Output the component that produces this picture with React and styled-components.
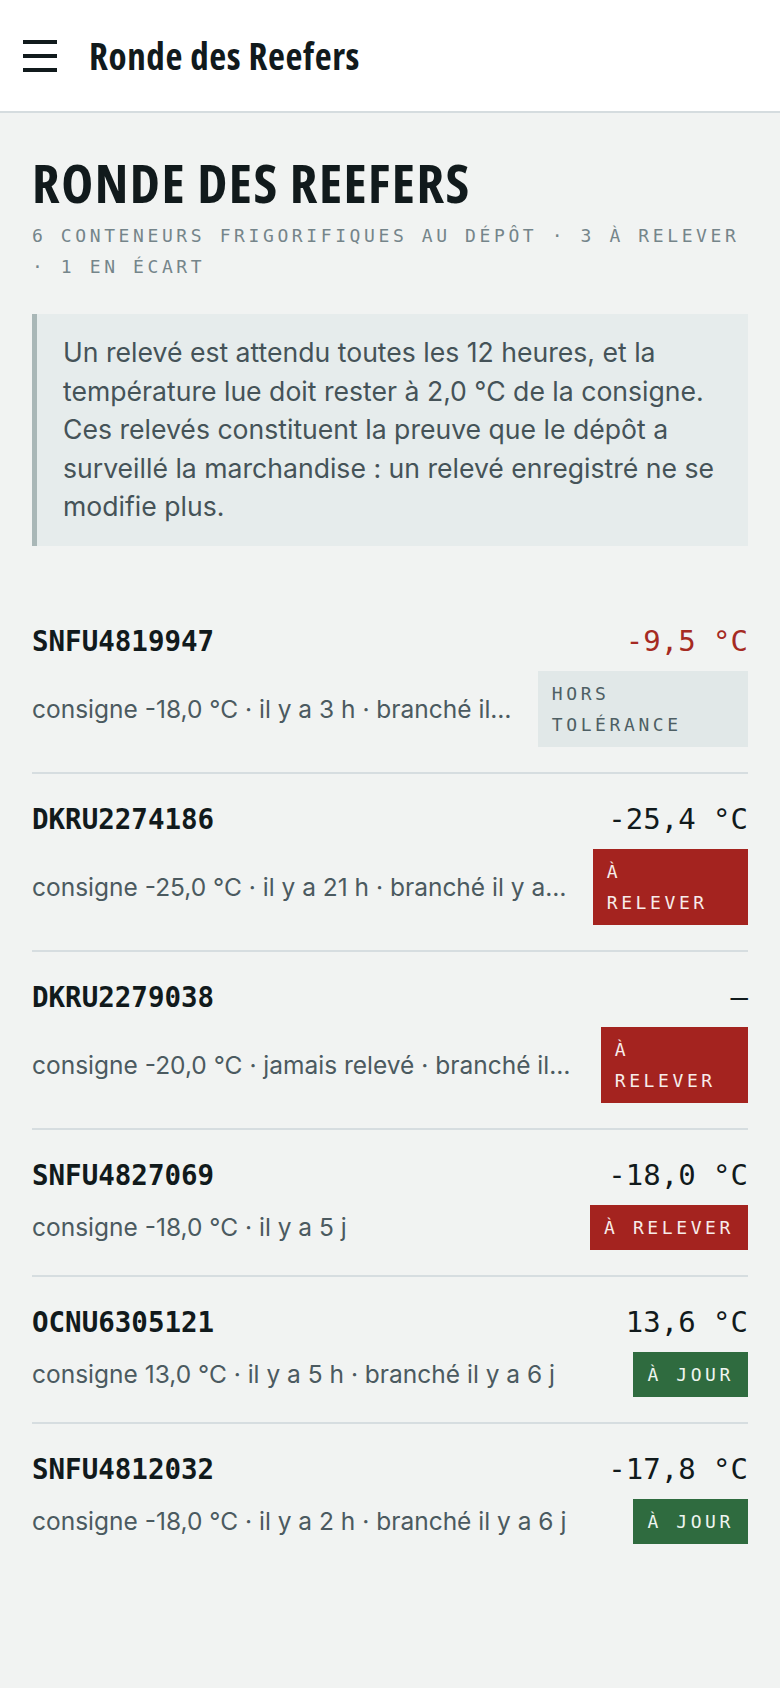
import styled, { createGlobalStyle } from 'styled-components';

const GlobalStyle = createGlobalStyle`
  * { box-sizing: border-box; }
  body {
    margin: 0;
    background: #f1f3f2;
    color: #111a1c;
    font-family: Inter, Roboto, "Liberation Sans", sans-serif;
  }
`;

const mono = `"DejaVu Sans Mono", "Liberation Mono", monospace`;

const Header = styled.header`
  height: 113px;
  background: #fff;
  border-bottom: 2px solid #d5dcdf;
  display: flex;
  align-items: center;
  gap: 32px;
  padding: 0 23px;
`;

const Burger = styled.button`
  display: flex;
  flex-direction: column;
  gap: 10px;
  padding: 0;
  border: 0;
  background: none;
  cursor: pointer;

  span {
    display: block;
    width: 34px;
    height: 4px;
    background: #111a1c;
  }
`;

const HeaderTitle = styled.div`
  font-family: "Open Sans", sans-serif;
  font-stretch: 75%;
  font-weight: 700;
  font-size: 37px;
  letter-spacing: 0.6px;
`;

const Main = styled.main`
  padding: 40px 32px 80px;
`;

const Title = styled.h1`
  margin: 0;
  font-family: "Open Sans", sans-serif;
  font-stretch: 75%;
  font-weight: 700;
  font-size: 54px;
  line-height: 1.1;
  letter-spacing: 1.5px;
  text-transform: uppercase;
`;

const Subtitle = styled.p`
  margin: 8px 0 0;
  font-family: ${mono};
  font-size: 18px;
  line-height: 31px;
  letter-spacing: 0.2em;
  color: #75858a;
  text-transform: uppercase;
`;

const Note = styled.p`
  margin: 32px 0 0;
  padding: 19px 24px 20px 26px;
  background: #e6ecec;
  border-left: 5px solid #a9b7b7;
  font-size: 26.6px;
  line-height: 38.5px;
  color: #455358;
`;

const List = styled.ul`
  list-style: none;
  margin: 50px 0 0;
  padding: 0;
`;

const Row = styled.li`
  padding: 27px 0 25px;
  & + & {
    border-top: 2px solid #d6dde0;
  }
`;

const TopLine = styled.div`
  display: flex;
  justify-content: space-between;
  align-items: baseline;
`;

const Code = styled.span`
  font-family: ${mono};
  font-weight: 700;
  font-size: 27.5px;
  line-height: 36px;
`;

const Temp = styled.span`
  font-family: ${mono};
  font-size: 29px;
  line-height: 36px;
  color: ${(p) => (p.$alert ? '#a52a22' : '#111a1c')};
`;

const BottomLine = styled.div`
  display: flex;
  align-items: center;
  gap: 24px;
  margin-top: 12px;
`;

const Meta = styled.span`
  flex: 1 1 auto;
  min-width: 0;
  white-space: nowrap;
  overflow: hidden;
  text-overflow: ellipsis;
  font-size: 24.5px;
  color: #4b5a60;
`;

const badgeColors = {
  grey: { bg: '#e1e8e8', fg: '#4e5f64' },
  red: { bg: '#a4231f', fg: '#f7ecea' },
  green: { bg: '#2f6b3f', fg: '#eef5ef' },
};

const Badge = styled.span`
  flex: 0 1 auto;
  padding: 7px 14px;
  font-family: ${mono};
  font-size: 18px;
  line-height: 31px;
  letter-spacing: 0.2em;
  text-transform: uppercase;
  background: ${(p) => badgeColors[p.$tone].bg};
  color: ${(p) => badgeColors[p.$tone].fg};
`;

const reefers = [
  { id: 'SNFU4819947', temp: '-9,5 °C', alert: true, meta: 'consigne -18,0 °C · il y a 3 h · branché il y a 6 j', badge: 'Hors tolérance', tone: 'grey' },
  { id: 'DKRU2274186', temp: '-25,4 °C', meta: 'consigne -25,0 °C · il y a 21 h · branché il y a 6 j', badge: 'À relever', tone: 'red' },
  { id: 'DKRU2279038', temp: '—', meta: 'consigne -20,0 °C · jamais relevé · branché il y a 6 j', badge: 'À relever', tone: 'red' },
  { id: 'SNFU4827069', temp: '-18,0 °C', meta: 'consigne -18,0 °C · il y a 5 j', badge: 'À relever', tone: 'red' },
  { id: 'OCNU6305121', temp: '13,6 °C', meta: 'consigne 13,0 °C · il y a 5 h · branché il y a 6 j', badge: 'À jour', tone: 'green' },
  { id: 'SNFU4812032', temp: '-17,8 °C', meta: 'consigne -18,0 °C · il y a 2 h · branché il y a 6 j', badge: 'À jour', tone: 'green' },
];

export default function App() {
  return (
    <>
      <GlobalStyle />
      <Header>
        <Burger aria-label="Menu">
          <span />
          <span />
          <span />
        </Burger>
        <HeaderTitle>Ronde des Reefers</HeaderTitle>
      </Header>
      <Main>
        <Title>Ronde des Reefers</Title>
        <Subtitle>6 conteneurs frigorifiques au dépôt · 3 à relever · 1 en écart</Subtitle>
        <Note>
          Un relevé est attendu toutes les 12 heures, et la température lue doit rester à 2,0 °C de la
          consigne. Ces relevés constituent la preuve que le dépôt a surveillé la marchandise : un relevé
          enregistré ne se modifie plus.
        </Note>
        <List>
          {reefers.map((r) => (
            <Row key={r.id}>
              <TopLine>
                <Code>{r.id}</Code>
                <Temp $alert={r.alert}>{r.temp}</Temp>
              </TopLine>
              <BottomLine>
                <Meta>{r.meta}</Meta>
                <Badge $tone={r.tone}>{r.badge}</Badge>
              </BottomLine>
            </Row>
          ))}
        </List>
      </Main>
    </>
  );
}
